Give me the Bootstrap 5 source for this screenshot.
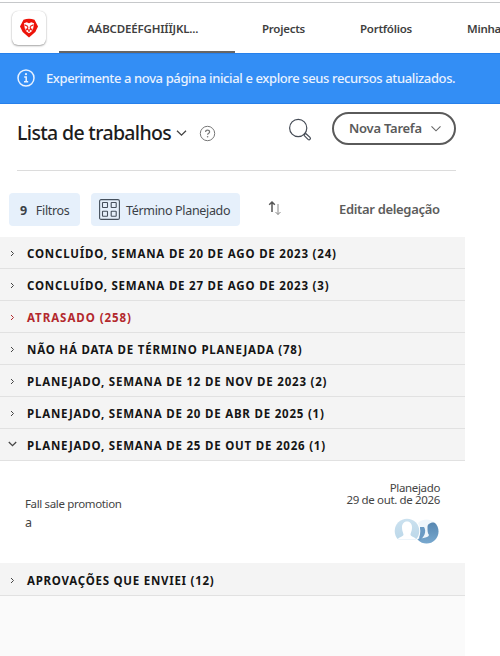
<!DOCTYPE html>
<html lang="pt-BR">
<head>
<meta charset="utf-8">
<meta name="viewport" content="width=device-width, initial-scale=1">
<title>Lista de trabalhos</title>
<link href="https://cdn.jsdelivr.net/npm/bootstrap@5.3.0/dist/css/bootstrap.min.css" rel="stylesheet">
<style>
body{font-family:"Noto Sans","Open Sans",sans-serif;color:#2c2c2c;background:#fff;height:656px;overflow:hidden;white-space:nowrap}
svg{display:block;flex:none}
.topbar{height:51px;border-top:1px solid #c6c8ca;margin-top:2px;font-size:11.5px;font-weight:600;color:#3f3f3f;overflow:hidden}
.brand-tile{width:34px;height:34px;margin:8px 0 0 12px;border-radius:6px;box-shadow:0 1px 2px rgba(0,0,0,.35),0 0 1px rgba(0,0,0,.2);flex:none}
.tab-item{height:50px;line-height:51px;flex:none;letter-spacing:-.25px}
.tab-current{width:176px;margin:0 27px 0 13px;padding-left:28px;border-bottom:2px solid #666;letter-spacing:-.16px}
.tab-projects{width:98px}
.tab-portfolios{width:107px}
.notice{height:51px;background:#338ef5;border-top:1px solid #2680eb;border-bottom:1px solid #2680eb;color:#e9f2ff;padding-left:17px;font-size:13px;letter-spacing:-.38px;font-weight:500}
.notice svg{margin:0 11px 2px 0}
.workhead{height:67px;margin:0 44px 0 17px;border-bottom:1px solid #dcdcdc}
.head-title{font-size:19.5px;font-weight:500;color:#1d1d1d;letter-spacing:-.65px}
.help-icon{margin-left:11px}
.search-icon{margin:14px 20px 0 0}
.pill{width:124px;height:33px;border:2px solid #5a5a5a;border-radius:17px;font-size:13px;font-weight:600;color:#5a5a5a;padding-left:15px;letter-spacing:-.25px}
.pill svg{margin-left:8px}
.tools{height:66px;width:465px;padding:22px 0 0 9px}
.chip{height:33px;border-radius:4px;background:#e6f0fb;font-size:12.5px;color:#3b4147;letter-spacing:-.33px}
.chip span,.chip b{padding-top:4px}
.chip-filter{width:71px;padding-left:11px;gap:9px}
.chip-group{width:149px;margin-left:11px;padding-left:8px;gap:6px}
.sort-icon{margin:7px 0 0 27px}
.edit-link{margin:7px 0 0 56px;font-size:13px;color:#5c5c5c;letter-spacing:-.33px}
.worklist{width:465px}
.group-row{height:32px;background:#f4f4f4;border-bottom:1px solid #e1e1e1;font-size:11.5px;font-weight:700;color:#151515;padding-left:8px;letter-spacing:.79px}
.group-row span{padding-top:3px}
.group-row svg{margin:2px 10px 0 0;color:#454545}
.group-row.late,.group-row.late svg{color:#b3282d}
.group-row.late{letter-spacing:.95px}
.group-row.sent{height:33px;letter-spacing:.74px}
.task{height:102px;padding:0 25px;font-size:11.5px;color:#444;letter-spacing:-.35px}
.task-name{padding-top:33px;line-height:19px}
.task-note{font-size:12.5px}
.task-due{padding-top:21px;line-height:12px}
.faces{margin-top:11px}
.foot{height:61px;background:#fafafa}
</style>
</head>
<body>
<nav class="topbar d-flex">
  <div class="brand-tile d-flex align-items-center justify-content-center">
    <svg width="20" height="20" viewBox="0 0 20 20"><path fill="#ed1309" d="M4.500 1.700Q10-.3 15.500 1.700L19 8.500 16.300 14 10 19.400 3.700 14 1 8.500Z"/><path fill="#fff" d="M5 5.200 7.700 4.300 10 5.200l2.300-.9 2.700.9-.8 5.300-1.600 3L10 15.200l-2.600-1.700-1.600-3Z"/><path d="m5.600 6.800 3.300 1.700M14.400 6.800l-3.300 1.700M8.900 8.600l-.4 2.600L10 12.600l1.500-1.400-.4-2.600M10 12.600v1.400M7 10.500l.6 1.900M13 10.500l-.6 1.900" fill="none" stroke="#ed1309" stroke-width="1.100"/></svg>
  </div>
  <div class="tab-item tab-current">AÁBCDEÉFGHIÍÏJKL...</div>
  <div class="tab-item tab-projects">Projects</div>
  <div class="tab-item tab-portfolios">Portfólios</div>
  <div class="tab-item">Minha</div>
</nav>
<div class="notice d-flex align-items-center">
  <svg width="18" height="18" viewBox="0 0 18 18"><circle cx="9" cy="9" r="8" fill="none" stroke="#e9f2ff" stroke-width="1.500"/><circle cx="9" cy="5.200" r="1.100" fill="#e9f2ff"/><path d="M7.200 8h2v4.600M7 12.800h4.200" fill="none" stroke="#e9f2ff" stroke-width="1.500"/></svg>
  <span>Experimente a nova página inicial e explore seus recursos atualizados.</span>
</div>
<header class="workhead d-flex">
  <div class="d-flex align-items-center flex-grow-1 mb-2">
    <span class="head-title">Lista de trabalhos</span>
    <svg class="ms-1" width="13" height="10" viewBox="0 0 13 10"><path d="m2 2.800 4.500 4.300L11 2.800" fill="none" stroke="#444" stroke-width="1.300"/></svg>
    <svg class="help-icon" width="17" height="17" viewBox="0 0 17 17"><circle cx="8.500" cy="8.500" r="7.200" fill="none" stroke="#777"/><path d="M6.600 7c0-2.500 4-2.400 4-.1 0 1.400-2 1.300-2 2.800" fill="none" stroke="#777" stroke-width="1.200"/><circle cx="8.600" cy="11.700" r=".8" fill="#777"/></svg>
  </div>
  <svg class="search-icon" width="24" height="24" viewBox="0 0 24 24" fill="none" stroke="#454b55" stroke-width="1.200"><circle cx="10.200" cy="10" r="8.600"/><path d="m16.200 16.200 1.800-.5 4 3.700c1.200 1.500-.5 3.200-2 2l-3.800-3.800Z"/></svg>
  <div class="pill d-flex align-items-center mt-2"><span>Nova Tarefa</span><svg width="12" height="10" viewBox="0 0 12 10"><path d="m1.500 2.300 4.500 4.500 4.500-4.500" fill="none" stroke="#666" stroke-width="1.100"/></svg></div>
</header>
<div class="tools d-flex">
  <div class="chip chip-filter d-flex align-items-center"><b>9</b><span>Filtros</span></div>
  <div class="chip chip-group d-flex align-items-center">
    <svg width="21" height="21" viewBox="0 0 21 21" fill="none" stroke="#46505c" stroke-width="1.100"><rect x=".6" y=".6" width="19.800" height="19.800" rx="1.500"/><rect x="3.500" y="3.500" width="5" height="5" rx=".5"/><rect x="12.200" y="3.500" width="5" height="5" rx=".5"/><rect x="3.500" y="12.200" width="5" height="5" rx=".5"/><rect x="12.200" y="12.200" width="5" height="5" rx=".5"/></svg>
    <span>Término Planejado</span>
  </div>
  <svg class="sort-icon" width="16" height="17" viewBox="0 0 16 17" fill="none"><path d="M5 12V2.300M2.200 4.800 5 2l2.800 2.800" stroke="#555" stroke-width="1.500"/><path d="M11 4v10.500M8.500 12l2.500 2.500 2.500-2.500" stroke="#888"/></svg>
  <span class="edit-link fw-semibold">Editar delegação</span>
</div>
<main class="worklist">
  <div class="group-row d-flex align-items-center"><svg width="9" height="9" viewBox="0 0 9 9"><path d="m3 2 2.500 2.500L3 7" fill="none" stroke="currentColor"/></svg><span>CONCLUÍDO, SEMANA DE 20 DE AGO DE 2023 (24)</span></div>
  <div class="group-row d-flex align-items-center"><svg width="9" height="9" viewBox="0 0 9 9"><path d="m3 2 2.500 2.500L3 7" fill="none" stroke="currentColor"/></svg><span>CONCLUÍDO, SEMANA DE 27 DE AGO DE 2023 (3)</span></div>
  <div class="group-row late d-flex align-items-center"><svg width="9" height="9" viewBox="0 0 9 9"><path d="m3 2 2.500 2.500L3 7" fill="none" stroke="currentColor"/></svg><span>ATRASADO (258)</span></div>
  <div class="group-row d-flex align-items-center"><svg width="9" height="9" viewBox="0 0 9 9"><path d="m3 2 2.500 2.500L3 7" fill="none" stroke="currentColor"/></svg><span>NÃO HÁ DATA DE TÉRMINO PLANEJADA (78)</span></div>
  <div class="group-row d-flex align-items-center"><svg width="9" height="9" viewBox="0 0 9 9"><path d="m3 2 2.500 2.500L3 7" fill="none" stroke="currentColor"/></svg><span>PLANEJADO, SEMANA DE 12 DE NOV DE 2023 (2)</span></div>
  <div class="group-row d-flex align-items-center"><svg width="9" height="9" viewBox="0 0 9 9"><path d="m3 2 2.500 2.500L3 7" fill="none" stroke="currentColor"/></svg><span>PLANEJADO, SEMANA DE 20 DE ABR DE 2025 (1)</span></div>
  <div class="group-row d-flex align-items-center"><svg width="9" height="9" viewBox="0 0 9 9"><path d="M.8 1 4.500 4.700 8.200 1" fill="none" stroke="currentColor" stroke-width="1.300"/></svg><span>PLANEJADO, SEMANA DE 25 DE OUT DE 2026 (1)</span></div>
  <div class="task d-flex justify-content-between">
    <div class="task-name"><div>Fall sale promotion</div><div class="task-note">a</div></div>
    <div class="task-due text-end"><div>Planejado</div><div>29 de out. de 2026</div>
      <svg class="faces ms-auto" width="46" height="28" viewBox="0 0 46 28"><defs><linearGradient id="ga" x2="0" y2="1"><stop stop-color="#cbe1ef"/><stop offset="1" stop-color="#b9d6e8"/></linearGradient><linearGradient id="gb" x2="0" y2="1"><stop stop-color="#5787b1"/><stop offset="1" stop-color="#79a9cf"/></linearGradient><clipPath id="ca"><path d="M0 0h26v22.500H0Z"/></clipPath><clipPath id="cb"><circle cx="32.500" cy="14.500" r="12"/></clipPath></defs><circle cx="32.500" cy="14.500" r="12" fill="#f0f7fc"/><g clip-path="url(#cb)"><path d="M33.500 10C33.500 4 45 4 45 10v17H20v-4c6-2 14-1.500 15-5-1.500-2-1.500-4-1.500-8Z" fill="url(#gb)"/><path d="M26 10h4c3 4 0 11-5 14Z" fill="#6b9bc4"/></g><circle cx="13" cy="14" r="13.300" fill="#fff"/><circle cx="13" cy="14" r="12.300" fill="url(#ga)" clip-path="url(#ca)"/><path d="M8 10C8 2.500 18 2.500 18 10c0 4-1 5-1.500 7.500 0 2 4 2 6 5H3.500c2-3 6-3 6-5C9 15 8 14 8 10Z" fill="#fff"/></svg>
    </div>
  </div>
  <div class="group-row sent d-flex align-items-center"><svg width="9" height="9" viewBox="0 0 9 9"><path d="m3 2 2.500 2.500L3 7" fill="none" stroke="currentColor"/></svg><span>APROVAÇÕES QUE ENVIEI (12)</span></div>
  <div class="foot"></div>
</main>
<script src="https://cdn.jsdelivr.net/npm/bootstrap@5.3.0/dist/js/bootstrap.bundle.min.js"></script>
</body>
</html>
